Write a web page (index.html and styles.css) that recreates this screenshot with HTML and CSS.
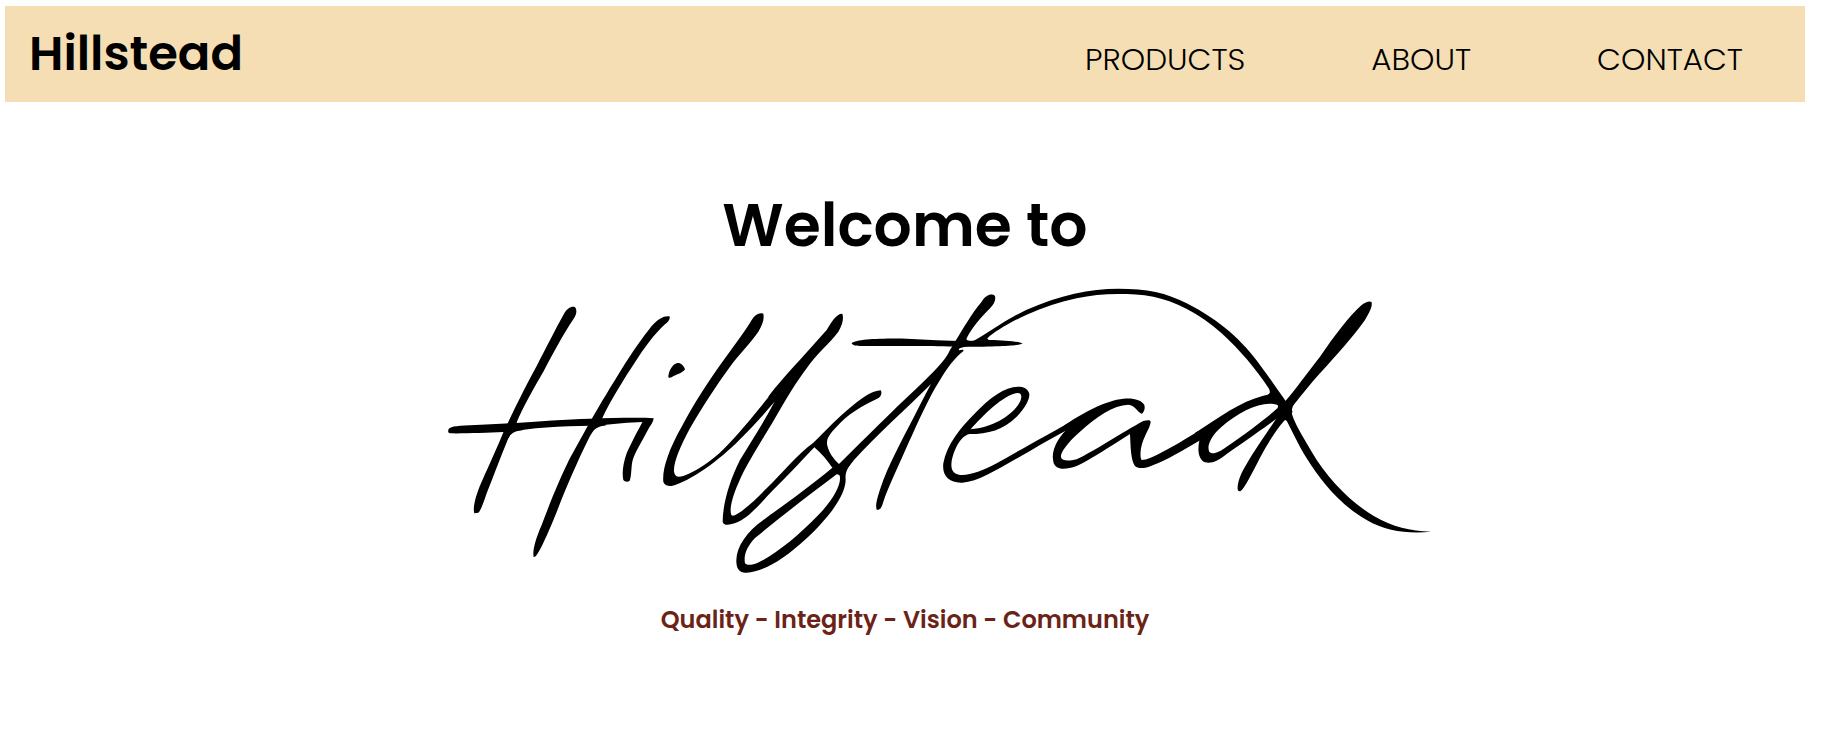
FILE: index.html
```html
<!DOCTYPE html>
<html lang="en">
<head>
<meta charset="utf-8">
<meta name="viewport" content="width=device-width, initial-scale=1">
<title>Hillstead</title>
<link rel="stylesheet" href="styles.css">
</head>
<body>
<header class="site-header">
  <a class="brand" href="#">Hillstead</a>
  <nav class="site-nav" aria-label="Main">
    <a href="#products">PRODUCTS</a>
    <a href="#about">ABOUT</a>
    <a href="#contact">CONTACT</a>
  </nav>
</header>
<main class="hero">
  <h1 class="welcome">Welcome to</h1>
  <svg class="signature" viewBox="-210 0 3210 880" role="img" aria-label="Hillstead signature logo">
    <g>
      <path d="M103 700C98 685 105 650 125 605C150 550 175 495 190 457C215 405 240 350 290 258C320 200 345 150 370 105C380 85 395 78 404 81C412 88 410 102 402 115C365 170 340 220 310 275C275 335 240 400 230 428C222 445 215 458 205 475C180 535 160 590 140 640C130 670 122 692 115 698Z"/>
      <path d="M25 450C27 440 45 438 90 436C250 430 350 418 450 416C520 414 600 412 641 415C640 425 635 432 628 442C600 495 580 525 576 550C573 575 574 590 569 602C563 607 555 606 550 600C546 580 548 555 560 520C575 485 595 450 607 426C570 428 520 430 485 437C400 437 300 440 230 452L190 456C140 458 70 461 30 460C24 458 24 454 25 450Z"/>
      <path d="M281 831C277 815 285 780 305 735C335 655 358 600 388 538L446 433C470 390 500 340 540 275C580 210 610 170 635 138C655 117 670 107 688 109C692 115 686 125 675 133C643 162 614 202 585 247C550 300 513 360 487 414C477 430 457 455 449 470C424 520 392 590 366 655C345 710 320 770 302 805C292 823 287 832 281 831Z"/>
      <path d="M203 478C210 462 222 453 250 450L210 442ZM446 472C458 448 475 438 500 436L460 430Z"/>
      <path d="M685 290C686 275 695 255 710 250C720 247 730 255 735 268C730 278 705 285 695 292C690 294 685 294 685 290Z"/>
    </g>
    <g transform="translate(600 0)">
      <path d="M70 605C66 570 85 510 125 440C160 375 200 310 255 235C290 185 315 155 335 120C345 103 358 97 370 101C373 118 368 135 355 155C335 185 300 220 270 260C230 315 190 375 150 445C120 500 100 550 102 575C105 590 112 593 130 588C170 572 210 547 252 506C300 458 350 395 415 315L425 340L403 366C370 405 335 443 300 478C240 540 150 605 95 618C80 618 72 613 70 605Z"/>
      <path d="M385 350C400 330 410 318 430 295C470 250 520 195 560 150C575 125 590 100 607 101C612 115 607 135 595 155C570 190 530 220 500 265C470 305 445 345 405 415C370 475 320 550 295 610C275 655 268 690 274 705C278 709 284 707 290 703C320 685 350 655 380 625C430 575 470 525 520 488C560 450 590 415 640 375C670 350 700 332 722 331C728 340 722 352 710 357C670 375 620 405 590 440C565 465 558 480 562 497C568 520 580 535 597 552L617 570L577 563C560 540 545 520 523 502C480 548 430 600 380 650C340 695 310 725 275 732C262 736 250 735 248 725C248 670 270 600 300 540C330 490 370 430 403 366Z"/>
      <path fill-rule="evenodd" d="M577 563C490 635 410 690 370 720C320 755 290 800 289 840C288 868 300 880 320 878C370 875 430 840 500 775C580 700 616 640 617 600C615 580 620 565 640 543L597 552ZM590 583Q600 583 600 592C602 620 575 665 535 705C475 768 400 828 350 850C330 857 318 855 315 850C310 825 322 798 345 774C425 708 510 643 590 583Z"/>
    </g>
    <g transform="translate(1200 -30)">
      <path d="M-10 590L-3 582C70 510 160 420 230 355C280 305 315 275 330 240L345 215C370 175 395 130 425 95C440 72 455 70 465 78C468 92 462 103 450 115C420 145 395 175 380 205C378 212 385 213 400 213L370 232C358 234 355 238 357 241C362 239 370 238 371 242C345 262 320 295 300 330C265 385 235 455 205 520C175 590 145 650 130 695C125 712 120 722 110 719C105 705 112 680 130 630C160 555 200 485 235 415C250 385 262 362 273 342C200 415 110 495 40 572C25 590 18 598 15 615Z"/>
      <path d="M35 220C50 208 110 205 200 206C260 208 320 213 380 213L450 210C490 211 535 214 548 220C540 227 490 230 370 231C300 228 200 228 60 228C45 228 36 225 35 220Z"/>
    </g>
    <g transform="translate(1470 270)">
      <path fill-rule="evenodd" d="M265 50C225 50 180 82 135 130C90 175 50 225 40 280C35 320 60 340 97 338C150 335 220 287 300 243C340 219 380 197 415 178L450 140C350 195 270 240 200 280C150 308 100 322 78 311C58 303 62 270 75 240C85 215 100 197 118 192C175 192 220 180 260 140C290 110 302 80 297 68C292 55 280 50 265 50ZM122 178C160 135 220 75 262 69C275 68 277 80 270 95C250 135 190 172 122 178Z"/>
    </g>
    <g transform="translate(1800 -30)">
      <path d="M-200 213C-165 195 -105 150 -40 119C60 75 150 56 235 56C320 56 380 68 440 100C540 150 610 215 660 285C690 325 715 362 737 393L720 410L685 374C692 370 690 362 686 355C650 300 600 240 545 190C480 130 400 92 340 80C305 73 270 72 235 72C190 72 150 76 110 85C60 95 10 112 -40 134C-90 157 -140 187 -157 204C-160 207 -155 210 -150 212Z"/>
      <path d="M68 470C120 432 200 390 250 386C280 383 305 390 313 405C316 415 312 428 305 431C290 425 285 405 265 404C220 405 170 440 120 485C80 520 60 550 63 562C66 573 85 574 110 568C160 545 250 485 310 453C325 450 332 450 332 457C330 475 310 500 303 535C300 555 302 570 306 570C330 570 400 530 475 483L478 512C430 540 380 570 340 585C310 598 295 596 285 588C272 570 272 530 270 492C210 530 150 570 110 588C70 602 45 598 40 575C32 540 55 505 78 480Z"/>
      <path fill-rule="evenodd" d="M465 489C540 440 600 395 670 377C680 375 687 374 690 368L737 393L758 425L735 450L708 447C650 490 590 530 560 552C535 572 515 582 495 577C475 568 472 540 478 512ZM508 545C500 530 510 500 545 470C590 430 650 400 690 401C712 402 718 405 712 415C690 435 620 490 560 530C535 548 518 555 508 545Z"/>
    </g>
    <g transform="translate(2400 -30)">
      <path d="M137 392C170 355 200 310 240 260C285 195 330 135 365 105C378 95 390 92 395 97C397 110 390 125 375 150C340 200 290 255 240 310C200 355 165 400 158 410C155 418 155 425 156 432C162 455 185 495 215 545C258 620 330 696 400 737C460 772 510 782 573 785C510 792 440 785 380 750C300 705 240 630 200 565C175 525 155 480 140 452L135 450C120 465 95 500 70 545C45 590 25 635 8 657C2 665 -5 667 -7 658C-8 640 0 615 15 590C50 530 80 490 108 447L115 415Z"/>
    </g>
  </svg>
  <p class="tagline">Quality - Integrity - Vision - Community</p>
</main>
</body>
</html>
```
FILE: styles.css
```css
* { box-sizing: border-box; }

body {
  margin: 6px 16px 0 5px;
  background: #fff;
  color: #000;
  font-family: Poppins, Inter, "Open Sans", sans-serif;
}

.site-header {
  display: flex;
  justify-content: space-between;
  align-items: flex-start;
  padding: 12px 62px 12px 24px;
  background: #f5deb3;
}

.site-header a {
  color: inherit;
  text-decoration: none;
}

.brand {
  font-size: 48px;
  font-weight: 600;
  line-height: 72px;
}

.site-nav {
  display: flex;
  gap: 126px;
  padding-top: 17px;
  font-size: 31px;
  font-weight: 300;
  line-height: 48px;
}

.hero {
  display: flex;
  flex-direction: column;
  align-items: center;
  padding-top: 78px;
}

.welcome {
  margin: 0;
  font-size: 60px;
  font-weight: 600;
  line-height: 90px;
}

.signature {
  display: block;
  width: 60%;
  max-width: 1070px;
  margin-top: 10px;
}

.tagline {
  margin: 29px 0 0;
  color: #6b2318;
  font-size: 24px;
  font-weight: 600;
  line-height: 36px;
}
```
